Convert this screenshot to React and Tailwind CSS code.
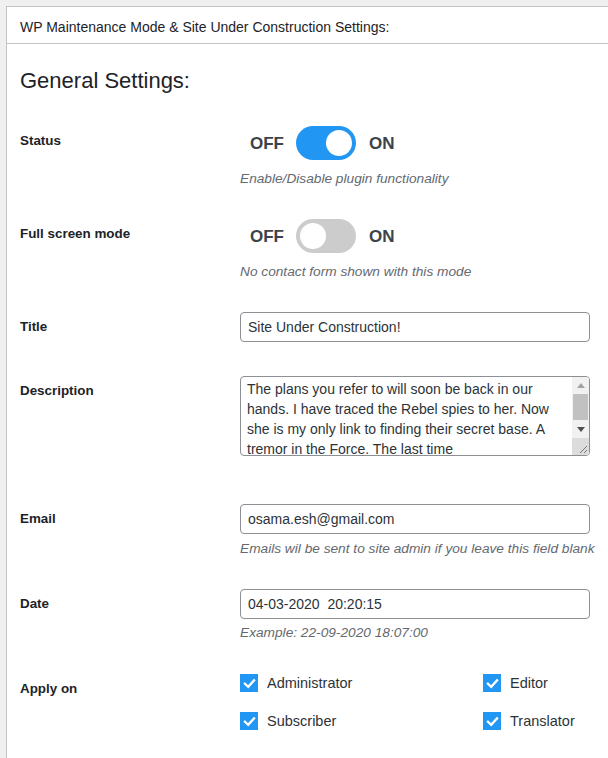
import React, { useState } from "react";

const Toggle = ({ on }) => (
  <div className="flex items-center h-[34px] pl-[10px]">
    <span className="text-[17px] font-semibold text-[#3c434a] leading-none">OFF</span>
    <div
      className={
        on
          ? "ml-[12px] w-[60px] h-[34px] rounded-full bg-[#2196f3] flex items-center justify-end pr-[4px]"
          : "ml-[12px] w-[60px] h-[34px] rounded-full bg-[#cccccc] flex items-center justify-start pl-[4px]"
      }
    >
      <div className="w-[26px] h-[26px] rounded-full bg-white" />
    </div>
    <span className="ml-[13px] text-[17px] font-semibold text-[#3c434a] leading-none">ON</span>
  </div>
);

const Check = ({ label }) => (
  <label className="flex items-center gap-[9px] h-[18px]">
    <span className="w-[18px] h-[18px] bg-[#2196f3] flex items-center justify-center">
      <svg width="13" height="13" viewBox="0 0 13 13">
        <polyline points="2,6.8 5.2,9.8 11,3.4" fill="none" stroke="white" strokeWidth="2.4" strokeLinecap="square" />
      </svg>
    </span>
    <span className="text-[14.5px] leading-[18px] text-[#2c3338]">{label}</span>
  </label>
);

const Desc = ({ children, className = "" }) => (
  <p className={"text-[13.7px] leading-[20px] italic text-[#646970] whitespace-nowrap " + className}>{children}</p>
);

const Label = ({ children, className = "" }) => (
  <div className={"w-[220px] shrink-0 text-[13.4px] leading-[20px] font-semibold text-[#1d2327] " + className}>
    {children}
  </div>
);

// classic scrollbar drawn next to the textarea
const ScrollBar = () => (
  <div className="w-[17px] shrink-0 bg-[#f1f1f1] flex flex-col">
    <div className="h-[17px] flex items-center justify-center">
      <svg width="8" height="5" viewBox="0 0 8 5">
        <polygon points="4,0 8,5 0,5" fill="#a3a3a3" />
      </svg>
    </div>
    <div className="flex-1 px-[1px]">
      <div className="h-[26px] bg-[#c1c1c1]" />
    </div>
    <div className="h-[17px] flex items-center justify-center">
      <svg width="8" height="5" viewBox="0 0 8 5">
        <polygon points="0,0 8,0 4,5" fill="#505050" />
      </svg>
    </div>
    <div className="h-[17px] bg-[#dcdcdc] flex items-end justify-end">
      <svg width="17" height="17" viewBox="0 0 17 17">
        <line x1="15" y1="8" x2="8" y2="15" stroke="#7a7a7a" strokeWidth="1" />
        <line x1="15" y1="12" x2="12" y2="15" stroke="#7a7a7a" strokeWidth="1" />
      </svg>
    </div>
  </div>
);

export default function App() {
  const [title, setTitle] = useState("Site Under Construction!");
  const [email, setEmail] = useState("osama.esh@gmail.com");
  const [date, setDate] = useState("04-03-2020  20:20:15");
  const [desc, setDesc] = useState(
    "The plans you refer to will soon be back in our hands. I have traced the Rebel spies to her. Now she is my only link to finding their secret base. A tremor in the Force. The last time\nI felt it was in the presence of my old master."
  );

  return (
    <div
      className="w-[608px] h-[758px] overflow-hidden bg-[#f0f0f1] pt-[6px] pl-[6px]"
      style={{ fontFamily: '"Liberation Sans", Arial, sans-serif' }}
    >
      <div className="w-[640px] h-[800px] bg-white border-l border-t border-[#c3c4c7]">
        <div className="h-[37px] border-b border-[#c3c4c7] pl-[13px] pt-[4px] flex items-center">
          <h1 className="text-[14px] text-[#1d2327]">WP Maintenance Mode &amp; Site Under Construction Settings:</h1>
        </div>

        <div className="pl-[13px]">
          <h2 className="mt-[22px] text-[22px] leading-[29px] text-[#1d2327]">General Settings:</h2>

          <div className="mt-[31px] flex">
            <Label className="pt-[5px]">Status</Label>
            <div>
              <Toggle on />
              <Desc className="mt-[9px]">Enable/Disable plugin functionality</Desc>
            </div>
          </div>

          <div className="mt-[30px] flex">
            <Label className="pt-[5px]">Full screen mode</Label>
            <div>
              <Toggle on={false} />
              <Desc className="mt-[9px]">No contact form shown with this mode</Desc>
            </div>
          </div>

          <div className="mt-[30px] flex items-center">
            <Label>Title</Label>
            <input
              value={title}
              onChange={(e) => setTitle(e.target.value)}
              className="w-[350px] h-[30px] px-[7px] rounded-[4px] border border-[#8c8f94] text-[14px] text-[#2c3338] outline-none"
            />
          </div>

          <div className="mt-[34px] flex">
            <Label className="pt-[5px]">Description</Label>
            <div className="w-[350px] h-[80px] rounded-[4px] border border-[#8c8f94] flex overflow-hidden">
              <textarea
                value={desc}
                onChange={(e) => setDesc(e.target.value)}
                className="flex-1 h-full pl-[6px] pr-[4px] pt-[2px] text-[14px] leading-[20px] text-[#2c3338] outline-none resize-none overflow-hidden"
              />
              <ScrollBar />
            </div>
          </div>

          <div className="mt-[48px] flex">
            <Label className="pt-[5px]">Email</Label>
            <div>
              <input
                value={email}
                onChange={(e) => setEmail(e.target.value)}
                className="w-[350px] h-[30px] px-[7px] rounded-[4px] border border-[#8c8f94] text-[14px] text-[#2c3338] outline-none"
              />
              <Desc className="mt-[5px]">Emails wil be sent to site admin if you leave this field blank</Desc>
            </div>
          </div>

          <div className="mt-[30px] flex">
            <Label className="pt-[5px]">Date</Label>
            <div>
              <input
                value={date}
                onChange={(e) => setDate(e.target.value)}
                className="w-[350px] h-[30px] px-[7px] rounded-[4px] border border-[#8c8f94] text-[14px] text-[#2c3338] outline-none whitespace-pre"
              />
              <Desc className="mt-[4px]">Example: 22-09-2020 18:07:00</Desc>
            </div>
          </div>

          <div className="mt-[31px] flex">
            <Label className="pt-[5px]">Apply on</Label>
            <div className="grid grid-cols-[243px_auto] gap-y-[20px]">
              <Check label="Administrator" />
              <Check label="Editor" />
              <Check label="Subscriber" />
              <Check label="Translator" />
            </div>
          </div>
        </div>
      </div>
    </div>
  );
}
